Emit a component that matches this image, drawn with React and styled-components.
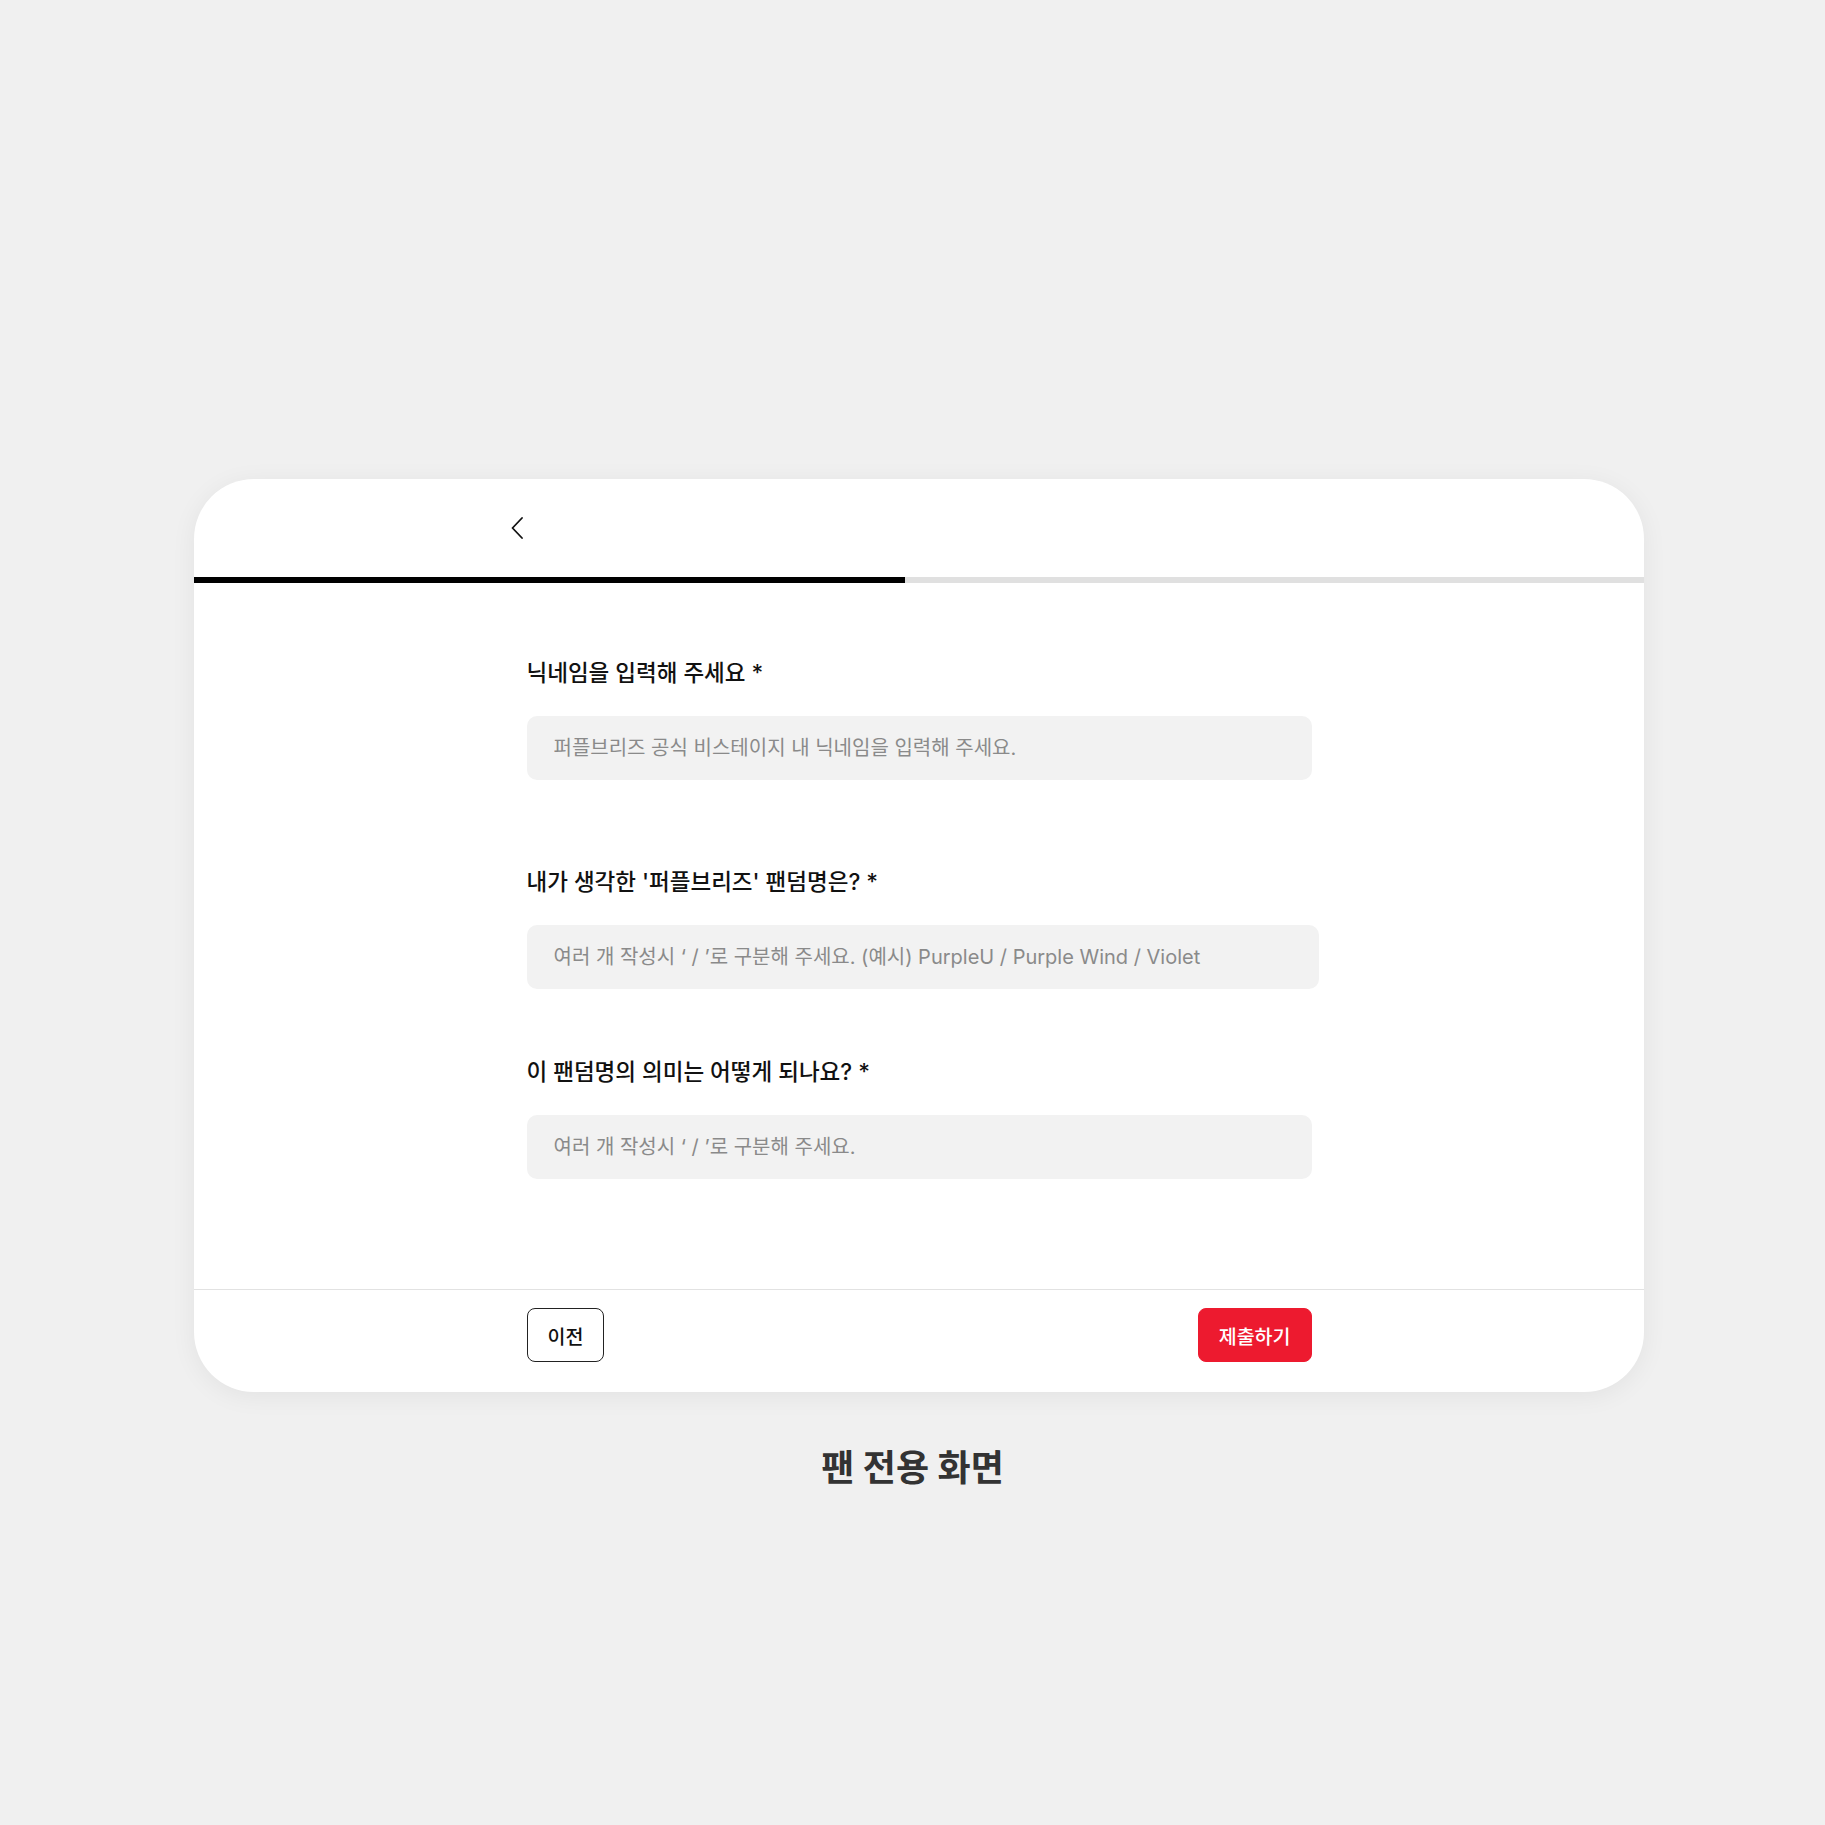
import React from 'react'
import styled, { createGlobalStyle } from 'styled-components'

const GlobalStyle = createGlobalStyle`
  * { box-sizing: border-box; }
  body {
    margin: 0;
    background: #f0f0f0;
    font-family: "Inter", "Noto Sans CJK KR", sans-serif;
    color: #111;
  }
`

const fields = [
  {
    label: '닉네임을 입력해 주세요 *',
    placeholder: '퍼플브리즈 공식 비스테이지 내 닉네임을 입력해 주세요.',
    gap: 0,
  },
  {
    label: "내가 생각한 '퍼플브리즈' 팬덤명은? *",
    placeholder: '여러 개 작성시 ‘ / ’로 구분해 주세요. (예시) PurpleU / Purple Wind / Violet',
    gap: 87,
    width: 792,
  },
  {
    label: '이 팬덤명의 의미는 어떻게 되나요? *',
    placeholder: '여러 개 작성시 ‘ / ’로 구분해 주세요.',
    gap: 68,
  },
]

const App = () => {
  return (
    <>
      <GlobalStyle />
      <Page>
        <CardRow>
          <Card>
            <Header>
              <Column>
                <BackButton aria-label="뒤로">
                  <svg width="12" height="22" viewBox="0 0 12 22" fill="none">
                    <polyline points="11,1 1.5,11 11,21" stroke="#111" strokeWidth="1.8" strokeLinecap="round" strokeLinejoin="round" />
                  </svg>
                </BackButton>
              </Column>
            </Header>
            <Progress>
              <ProgressFill $percent={49} />
            </Progress>
            <Body>
              <Column>
                {fields.map(f => (
                  <Field key={f.label} $gap={f.gap}>
                    <Label>{f.label}</Label>
                    <Input placeholder={f.placeholder} $width={f.width} />
                  </Field>
                ))}
              </Column>
            </Body>
            <Footer>
              <Column>
                <FooterRow>
                  <Button>이전</Button>
                  <Button $primary>제출하기</Button>
                </FooterRow>
              </Column>
            </Footer>
          </Card>
        </CardRow>
        <Caption>팬 전용 화면</Caption>
      </Page>
    </>
  )
}

const Page = styled.main`
  min-height: 1825px;
  padding-top: 479px;
`

const CardRow = styled.div`
  padding-left: 194px;
`

const Card = styled.section`
  width: 1450px;
  background: #fff;
  border-radius: 60px;
  overflow: hidden;
  box-shadow: 0 4px 26px rgba(0, 0, 0, 0.06);
`

const Column = styled.div`
  width: 785px;
  margin: 0 auto;
`

const Header = styled.header`
  height: 98px;
  display: flex;
  align-items: center;
`

const BackButton = styled.button`
  display: flex;
  align-items: center;
  padding: 0;
  margin-left: -16px;
  border: none;
  background: none;
  cursor: pointer;
`

const Progress = styled.div`
  height: 6px;
  background: #e0e0e0;
`

const ProgressFill = styled.div`
  height: 100%;
  width: ${p => p.$percent}%;
  background: #000;
`

const Body = styled.div`
  padding: 75px 0 110px;
`

const Field = styled.div`
  display: flex;
  flex-direction: column;
  gap: 29px;
  margin-top: ${p => p.$gap}px;
`

const Label = styled.label`
  font-size: 22.5px;
  font-weight: 500;
  line-height: 29px;
  color: #111;
`

const Input = styled.input`
  width: ${p => (p.$width ? `${p.$width}px` : '100%')};
  height: 64px;
  padding: 0 27px;
  border: none;
  border-radius: 10px;
  background: #f2f2f2;
  font-family: inherit;
  font-size: 20px;
  color: #111;
  outline: none;

  &::placeholder {
    color: #8a8a8a;
  }
`

const Footer = styled.footer`
  border-top: 1px solid #e2e2e2;
  padding: 18px 0 30px;
`

const FooterRow = styled.div`
  display: flex;
  justify-content: space-between;
  align-items: center;
`

const Button = styled.button`
  height: 54px;
  padding: 0 20px;
  border-radius: 8px;
  border: ${p => (p.$primary ? '1px solid #ed1a2f' : '1.5px solid #222')};
  background: ${p => (p.$primary ? '#ed1a2f' : '#fff')};
  color: ${p => (p.$primary ? '#fff' : '#111')};
  font-family: inherit;
  font-size: 19.5px;
  font-weight: 500;
  cursor: pointer;
`

const Caption = styled.h2`
  margin: 58px 0 0;
  text-align: center;
  font-size: 36px;
  font-weight: 700;
  line-height: 1;
  color: #333;
`

export default App
